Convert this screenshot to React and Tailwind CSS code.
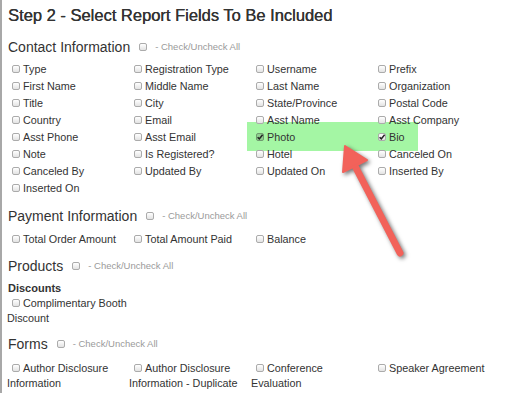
import React from 'react'

const CONTACT_FIELDS = [
  'Type', 'Registration Type', 'Username', 'Prefix',
  'First Name', 'Middle Name', 'Last Name', 'Organization',
  'Title', 'City', 'State/Province', 'Postal Code',
  'Country', 'Email', 'Asst Name', 'Asst Company',
  'Asst Phone', 'Asst Email', 'Photo', 'Bio',
  'Note', 'Is Registered?', 'Hotel', 'Canceled On',
  'Canceled By', 'Updated By', 'Updated On', 'Inserted By',
  'Inserted On',
]

const CHECKED = ['Photo', 'Bio']

const PAYMENT_FIELDS = ['Total Order Amount', 'Total Amount Paid', 'Balance']

const FORM_FIELDS = [
  'Author Disclosure Information',
  'Author Disclosure Information - Duplicate',
  'Conference Evaluation',
  'Speaker Agreement',
]

function Box({ checked, dark }) {
  return (
    <span
      className={`relative inline-block h-[8px] w-[8px] rounded-[2px] border ${
        dark ? 'border-[#6f9a6f] bg-[#8fcf8f]' : 'border-[#ababab] bg-gradient-to-b from-white to-[#e3e3e3]'
      }`}
    >
      {checked && (
        <svg viewBox="0 0 8 8" className="absolute left-[-1px] top-[-1px] h-[8px] w-[8px]">
          <path d="M1.6 4.2 L3.3 5.9 L6.6 1.8" fill="none" stroke="#222" strokeWidth="1.5" />
        </svg>
      )}
    </span>
  )
}

function Field({ label }) {
  const checked = CHECKED.includes(label)
  return (
    <div className="py-px text-[10.8px] leading-[15px] text-[#333]">
      <span className="ml-[5px] mr-[3px]">
        <Box checked={checked} dark={label === 'Photo'} />
      </span>
      {label}
    </div>
  )
}

function SectionHeading({ title, className }) {
  return (
    <div className={`flex items-center pl-px ${className}`}>
      <h3 className="text-[14px] leading-[20px] text-[#333]">{title}</h3>
      <span className="ml-[9px] mr-[8px] flex">
        <Box />
      </span>
      <span className="text-[9.5px] text-[#9a9a9a]">- Check/Uncheck All</span>
    </div>
  )
}

export default function App() {
  return (
    <div
      className="relative h-[393px] w-[510px] overflow-hidden border-l-2 border-[#a8a8a8] bg-white"
      style={{ fontFamily: '"Liberation Sans", Arial, sans-serif' }}
    >
      <div className="absolute left-[245px] top-[122px] h-[29px] w-[171px] bg-[#a4f6a4]" />

      <div className="relative pl-[5px] pt-[4px]">
        <h2 className="pl-px text-[16.5px] leading-[22px] text-[#333] [text-shadow:0.3px_0_0_#333]">
          Step 2 - Select Report Fields To Be Included
        </h2>

        <SectionHeading title="Contact Information" className="mt-[11px]" />
        <div className="mt-[4px] grid w-[488px] grid-cols-4">
          {CONTACT_FIELDS.map((f) => (
            <Field key={f} label={f} />
          ))}
        </div>

        <SectionHeading title="Payment Information" className="mt-[9px]" />
        <div className="mt-[5px] grid w-[488px] grid-cols-4">
          {PAYMENT_FIELDS.map((f) => (
            <Field key={f} label={f} />
          ))}
        </div>

        <SectionHeading title="Products" className="mt-[8px]" />
        <div className="mt-[5px] pl-px text-[11px] font-bold leading-[14px] text-[#333]">Discounts</div>
        <div className="grid w-[488px] grid-cols-4">
          <Field label="Complimentary Booth Discount" />
        </div>

        <SectionHeading title="Forms" className="mt-[7px]" />
        <div className="mt-[6px] grid w-[488px] grid-cols-4">
          {FORM_FIELDS.map((f) => (
            <Field key={f} label={f} />
          ))}
        </div>
      </div>

      <svg
        className="pointer-events-none absolute left-0 top-0"
        width="510"
        height="393"
        style={{ filter: 'drop-shadow(2px 2px 2px rgba(0,0,0,0.55))' }}
      >
        <line x1="353" y1="166" x2="398" y2="253" stroke="#f2625a" strokeWidth="7" strokeLinecap="round" />
        <polygon points="343,146 341,172 365,160" fill="#f2625a" stroke="#f2625a" strokeWidth="2" strokeLinejoin="round" />
      </svg>
    </div>
  )
}
